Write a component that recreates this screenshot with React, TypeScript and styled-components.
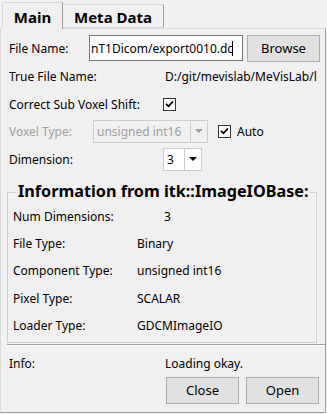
import React from "react";
import styled, { createGlobalStyle } from "styled-components";

const Global = createGlobalStyle`
  html, body { margin: 0; padding: 0; background: #f0f0f0; }
  body { font-family: "Noto Sans", "Open Sans", sans-serif; font-size: 12px; color: #000; }
  * { box-sizing: border-box; }
`;

const Window = styled.div`
  width: 327px;
  height: 414px;
  background: #f0f0f0;
  display: flex;
  flex-direction: column;
`;

const TabBar = styled.div`
  display: flex;
  align-items: flex-end;
  height: 28px;
  padding-left: 2px;
  position: relative;
  z-index: 1;
`;

const Tab = styled.div<{ $active?: boolean; $w: number }>`
  width: ${(p) => p.$w}px;
  height: ${(p) => (p.$active ? 27 : 24)}px;
  margin-bottom: ${(p) => (p.$active ? -1 : 0)}px;
  border: 1px solid #d9d9d9;
  border-bottom: ${(p) => (p.$active ? "none" : "1px solid #d9d9d9")};
  border-left: ${(p) => (p.$active ? "1px solid #d9d9d9" : "none")};
  border-right-color: #a0a0a0;
  background: #f0f0f0;
  font-weight: 700;
  font-size: 15px;
  display: flex;
  align-items: center;
  justify-content: center;
  padding-top: 1px;
`;

const Pane = styled.div`
  width: 326px;
  height: 385px;
  border: 1px solid #d9d9d9;
  border-right-color: #a0a0a0;
  border-bottom-color: #a0a0a0;
  display: flex;
  flex-direction: column;
  padding: 5px 0 0 8px;
`;

const Row = styled.div<{ $h: number; $disabled?: boolean; $mt?: number }>`
  height: ${(p) => p.$h}px;
  margin-top: ${(p) => p.$mt ?? 0}px;
  display: flex;
  align-items: center;
  color: ${(p) => (p.$disabled ? "#a0a0a0" : "#000")};
  white-space: nowrap;
  overflow: hidden;
  flex: none;
`;

const Label = styled.span<{ $w: number }>`
  width: ${(p) => p.$w}px;
  flex: none;
`;

const Plain = styled.span<{ $ml?: number }>`
  color: #000;
  margin-left: ${(p) => p.$ml ?? 0}px;
`;

const TextInput = styled.div`
  width: 154px;
  height: 26px;
  background: #fff;
  border: 1px solid #7a7a7a;
  display: flex;
  align-items: center;
  padding-left: 1px;
  overflow: hidden;
  white-space: nowrap;
`;

const Caret = styled.span`
  display: inline-block;
  width: 1px;
  height: 15px;
  background: #000;
  margin-left: -1px;
`;

const Button = styled.div<{ $ml: number }>`
  width: 73px;
  height: 27px;
  margin-left: ${(p) => p.$ml}px;
  border: 1px solid #adadad;
  background: #e1e1e1;
  display: flex;
  align-items: center;
  justify-content: center;
  font-size: 13px;
  flex: none;
`;

const Check = styled.span<{ $ml?: number }>`
  width: 13px;
  height: 13px;
  margin-left: ${(p) => p.$ml ?? 0}px;
  border: 1px solid #333;
  background: #fff;
  display: inline-flex;
  align-items: center;
  justify-content: center;
  flex: none;
`;

const Combo = styled.div<{ $w: number; $disabled?: boolean }>`
  width: ${(p) => p.$w}px;
  height: 23px;
  border: 1px solid #cccccc;
  background: ${(p) => (p.$disabled ? "#f0f0f0" : "#fff")};
  color: ${(p) => (p.$disabled ? "#a0a0a0" : "#000")};
  display: flex;
  align-items: center;
  padding-left: 3px;
  flex: none;
`;

const ComboText = styled.span`
  flex: 1;
`;

const ComboArrow = styled.span`
  width: 17px;
  height: 21px;
  border-left: 1px solid #cccccc;
  display: flex;
  align-items: center;
  justify-content: center;
`;

const Group = styled.div`
  margin: 19px 8px 0 -2px;
  border: 1px solid #d0d0d0;
  position: relative;
  height: 151px;
  padding: 10px 0 0 5px;
  display: flex;
  flex-direction: column;
  flex: none;
`;

const GroupTitle = styled.span`
  position: absolute;
  top: -12px;
  left: 8px;
  padding: 0 2px;
  background: #f0f0f0;
  font-weight: 700;
  font-size: 16.2px;
  line-height: 20px;
  white-space: nowrap;
`;

const Separator = styled.div`
  margin: 1px 0 0 -2px;
  height: 2px;
  flex: none;
  border-top: 1px solid #a0a0a0;
  border-bottom: 1px solid #ffffff;
`;

const Arrow = ({ color }: { color: string }) => (
  <svg width="8" height="4" viewBox="0 0 8 4">
    <path d="M0 0H8L4 4Z" fill={color} />
  </svg>
);

const Tick = () => (
  <svg width="9" height="8" viewBox="0 0 9 8">
    <path d="M1 3.8L3.5 6.3L8 1.5" stroke="#000" strokeWidth="1.8" fill="none" />
  </svg>
);

export default function App() {
  return (
    <Window>
      <Global />
      <TabBar>
        <Tab $active $w={61}>Main</Tab>
        <Tab $w={101}>Meta Data</Tab>
      </TabBar>
      <Pane>
        <Row $h={28}>
          <Label $w={80}>File Name:</Label>
          <TextInput>nT1Dicom/export0010.dc<Caret /></TextInput>
          <Button $ml={4}>Browse</Button>
        </Row>
        <Row $h={29}>
          <Label $w={156}>True File Name:</Label>
          <span>D:/git/mevislab/MeVisLab/l</span>
        </Row>
        <Row $h={26}>
          <Label $w={154}>Correct Sub Voxel Shift:</Label>
          <Check><Tick /></Check>
        </Row>
        <Row $h={28} $disabled>
          <Label $w={84}>Voxel Type:</Label>
          <Combo $w={115} $disabled>
            <ComboText>unsigned int16</ComboText>
            <ComboArrow><Arrow color="#a0a0a0" /></ComboArrow>
          </Combo>
          <Check $ml={10}><Tick /></Check>
          <Plain $ml={6}>Auto</Plain>
        </Row>
        <Row $h={28}>
          <Label $w={154}>Dimension:</Label>
          <Combo $w={39}>
            <ComboText>3</ComboText>
            <ComboArrow><Arrow color="#000" /></ComboArrow>
          </Combo>
        </Row>
        <Group>
          <GroupTitle>Information from itk::ImageIOBase:</GroupTitle>
          <Row $h={27}>
            <Label $w={151}>Num Dimensions:</Label>
            <span>3</span>
          </Row>
          <Row $h={27}>
            <Label $w={124}>File Type:</Label>
            <span>Binary</span>
          </Row>
          <Row $h={27}>
            <Label $w={124}>Component Type:</Label>
            <span>unsigned int16</span>
          </Row>
          <Row $h={28}>
            <Label $w={124}>Pixel Type:</Label>
            <span>SCALAR</span>
          </Row>
          <Row $h={27}>
            <Label $w={124}>Loader Type:</Label>
            <span>GDCMImageIO</span>
          </Row>
        </Group>
        <Separator />
        <Row $h={26} $mt={4}>
          <Label $w={156}>Info:</Label>
          <span>Loading okay.</span>
        </Row>
        <Row $h={28}>
          <Button $ml={157}>Close</Button>
          <Button $ml={7}>Open</Button>
        </Row>
      </Pane>
    </Window>
  );
}
